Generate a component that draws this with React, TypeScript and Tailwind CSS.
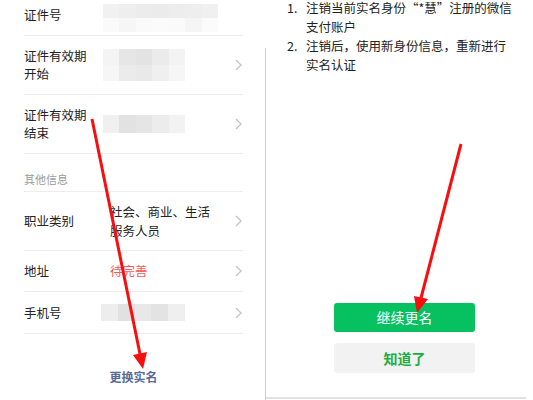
import React from 'react';

const FONT = { fontFamily: '"Noto Sans CJK SC", "Noto Sans", sans-serif' };

// pixelated placeholders (blurred personal data)
const Mosaic: React.FC<{ rows: string[][]; className: string }> = ({ rows, className }) => (
  <div className={`flex flex-col ${className}`}>
    {rows.map((row, i) => (
      <div key={i} className="flex flex-1">
        {row.map((c, j) => (
          <div key={j} className={`flex-1 ${c}`} />
        ))}
      </div>
    ))}
  </div>
);

const Chevron = () => (
  <svg width="7" height="12" viewBox="0 0 7 12" className="mr-[1px] shrink-0">
    <polyline points="1,1 6,6 1,11" fill="none" stroke="#c4c4c4" strokeWidth="1.3" />
  </svg>
);

const Row: React.FC<{ h: string; label: React.ReactNode; children?: React.ReactNode; chevron?: boolean }> = ({ h, label, children, chevron = true }) => (
  <div className={`flex items-center border-b border-[#ededed] ${h}`}>
    <div className="w-[79px] shrink-0 text-[12.5px] leading-[18px] text-[#222]">{label}</div>
    <div className="flex-1 min-w-0">{children}</div>
    {chevron && <Chevron />}
  </div>
);

const App: React.FC = () => {
  return (
    <div className="relative flex h-[400px] w-[533px] overflow-hidden bg-white" style={FONT}>
      {/* Left screenshot */}
      <aside className="w-[265px] shrink-0 flex flex-col pl-[24px] pr-[22px]">
        <div className="flex items-start h-[36px] border-b border-[#ededed]">
          <div className="w-[79px] shrink-0 mt-[6px] text-[12.5px] leading-[18px] text-[#222]">证件号</div>
          <Mosaic
            className="mt-[4px] w-[115px] h-[28px]"
            rows={[
              ['bg-[#f1f1f1]', 'bg-[#eeeeee]', 'bg-[#ececec]', 'bg-[#ebebeb]', 'bg-[#ededed]', 'bg-[#eeeeee]', 'bg-[#f0f0f0]'],
              ['bg-[#fafafa]', 'bg-[#f6f6f6]', 'bg-[#fafafa]', 'bg-[#fbfbfb]', 'bg-[#fafafa]', 'bg-[#f5f5f5]', 'bg-[#fbfbfb]'],
            ]}
          />
        </div>
        <Row h="h-[59px]" label={<>证件有效期<br />开始</>}>
          <Mosaic
            className="w-[82px] h-[32px]"
            rows={[
              ['bg-[#f4f4f4]', 'bg-[#e6e6e6]', 'bg-[#e3e3e3]', 'bg-[#ebebeb]', 'bg-[#f3f3f3]'],
              ['bg-[#f6f6f6]', 'bg-[#ebebeb]', 'bg-[#e9e9e9]', 'bg-[#efefef]', 'bg-[#f6f6f6]'],
            ]}
          />
        </Row>
        <Row h="h-[59px]" label={<>证件有效期<br />结束</>}>
          <Mosaic
            className="w-[82px] h-[18px]"
            rows={[['bg-[#f0f0f0]', 'bg-[#e2e2e2]', 'bg-[#e5e5e5]', 'bg-[#ececec]', 'bg-[#f2f2f2]']]}
          />
        </Row>
        <div className="flex items-end h-[38px] pb-[5px] border-b border-[#ededed] text-[11px] leading-[14px] text-[#9a9a9a]">
          其他信息
        </div>
        <Row h="h-[59px]" label="职业类别">
          <div className="pl-[7px] text-[12.5px] leading-[19px] text-[#222]">
            社会、商业、生活<br />服务人员
          </div>
        </Row>
        <Row h="h-[41px]" label="地址">
          <div className="pl-[7px] text-[12.5px] leading-[18px] text-[#f25b5b]">待完善</div>
        </Row>
        <Row h="h-[42px]" label="手机号">
          <Mosaic
            className="-ml-[2px] w-[84px] h-[17px]"
            rows={[['bg-[#ededed]', 'bg-[#e1e1e1]', 'bg-[#e8e8e8]', 'bg-[#e3e3e3]', 'bg-[#efefef]']]}
          />
        </Row>
        <div className="mt-[35px] text-center text-[12px] leading-[16px] font-bold text-[#576b95]">更换实名</div>
      </aside>

      {/* Right screenshot */}
      <section className="relative flex-1">
        <div className="absolute left-0 top-[48px] bottom-0 w-px bg-[#cdcdcd]" />
        <div className="w-[261px] h-[399px] border-b-2 border-[#e2e2e2] flex flex-col">
          <ol className="mt-[-2px] pl-[22px] text-[12.5px] leading-[19px] text-[#222] whitespace-nowrap">
            <li className="flex">
              <span className="w-[19px] shrink-0">1.</span>
              <span>注销当前实名身份“*慧”注册的微信<br />支付账户</span>
            </li>
            <li className="flex">
              <span className="w-[19px] shrink-0">2.</span>
              <span>注销后，使用新身份信息，重新进行<br />实名认证</span>
            </li>
          </ol>
          <button className="mt-[229px] ml-[69px] w-[141px] h-[29px] rounded-[3px] bg-[#07c160] text-[14px] text-white">
            继续更名
          </button>
          <button className="mt-[11px] ml-[69px] w-[141px] h-[30px] rounded-[3px] bg-[#f2f2f2] text-[14px] font-bold text-[#1aad3f]">
            知道了
          </button>
        </div>
      </section>

      {/* red annotation arrows */}
      <svg className="absolute inset-0 pointer-events-none" width="533" height="400" viewBox="0 0 533 400">
        <line x1="92" y1="119" x2="140" y2="354" stroke="#f50f0f" strokeWidth="3" />
        <polygon points="143,369 147,352 133,355" fill="#f50f0f" />
        <line x1="461" y1="144" x2="421" y2="298" stroke="#f50f0f" strokeWidth="3" />
        <polygon points="417,313 428,299 414,296" fill="#f50f0f" />
      </svg>
    </div>
  );
};

export default App;
